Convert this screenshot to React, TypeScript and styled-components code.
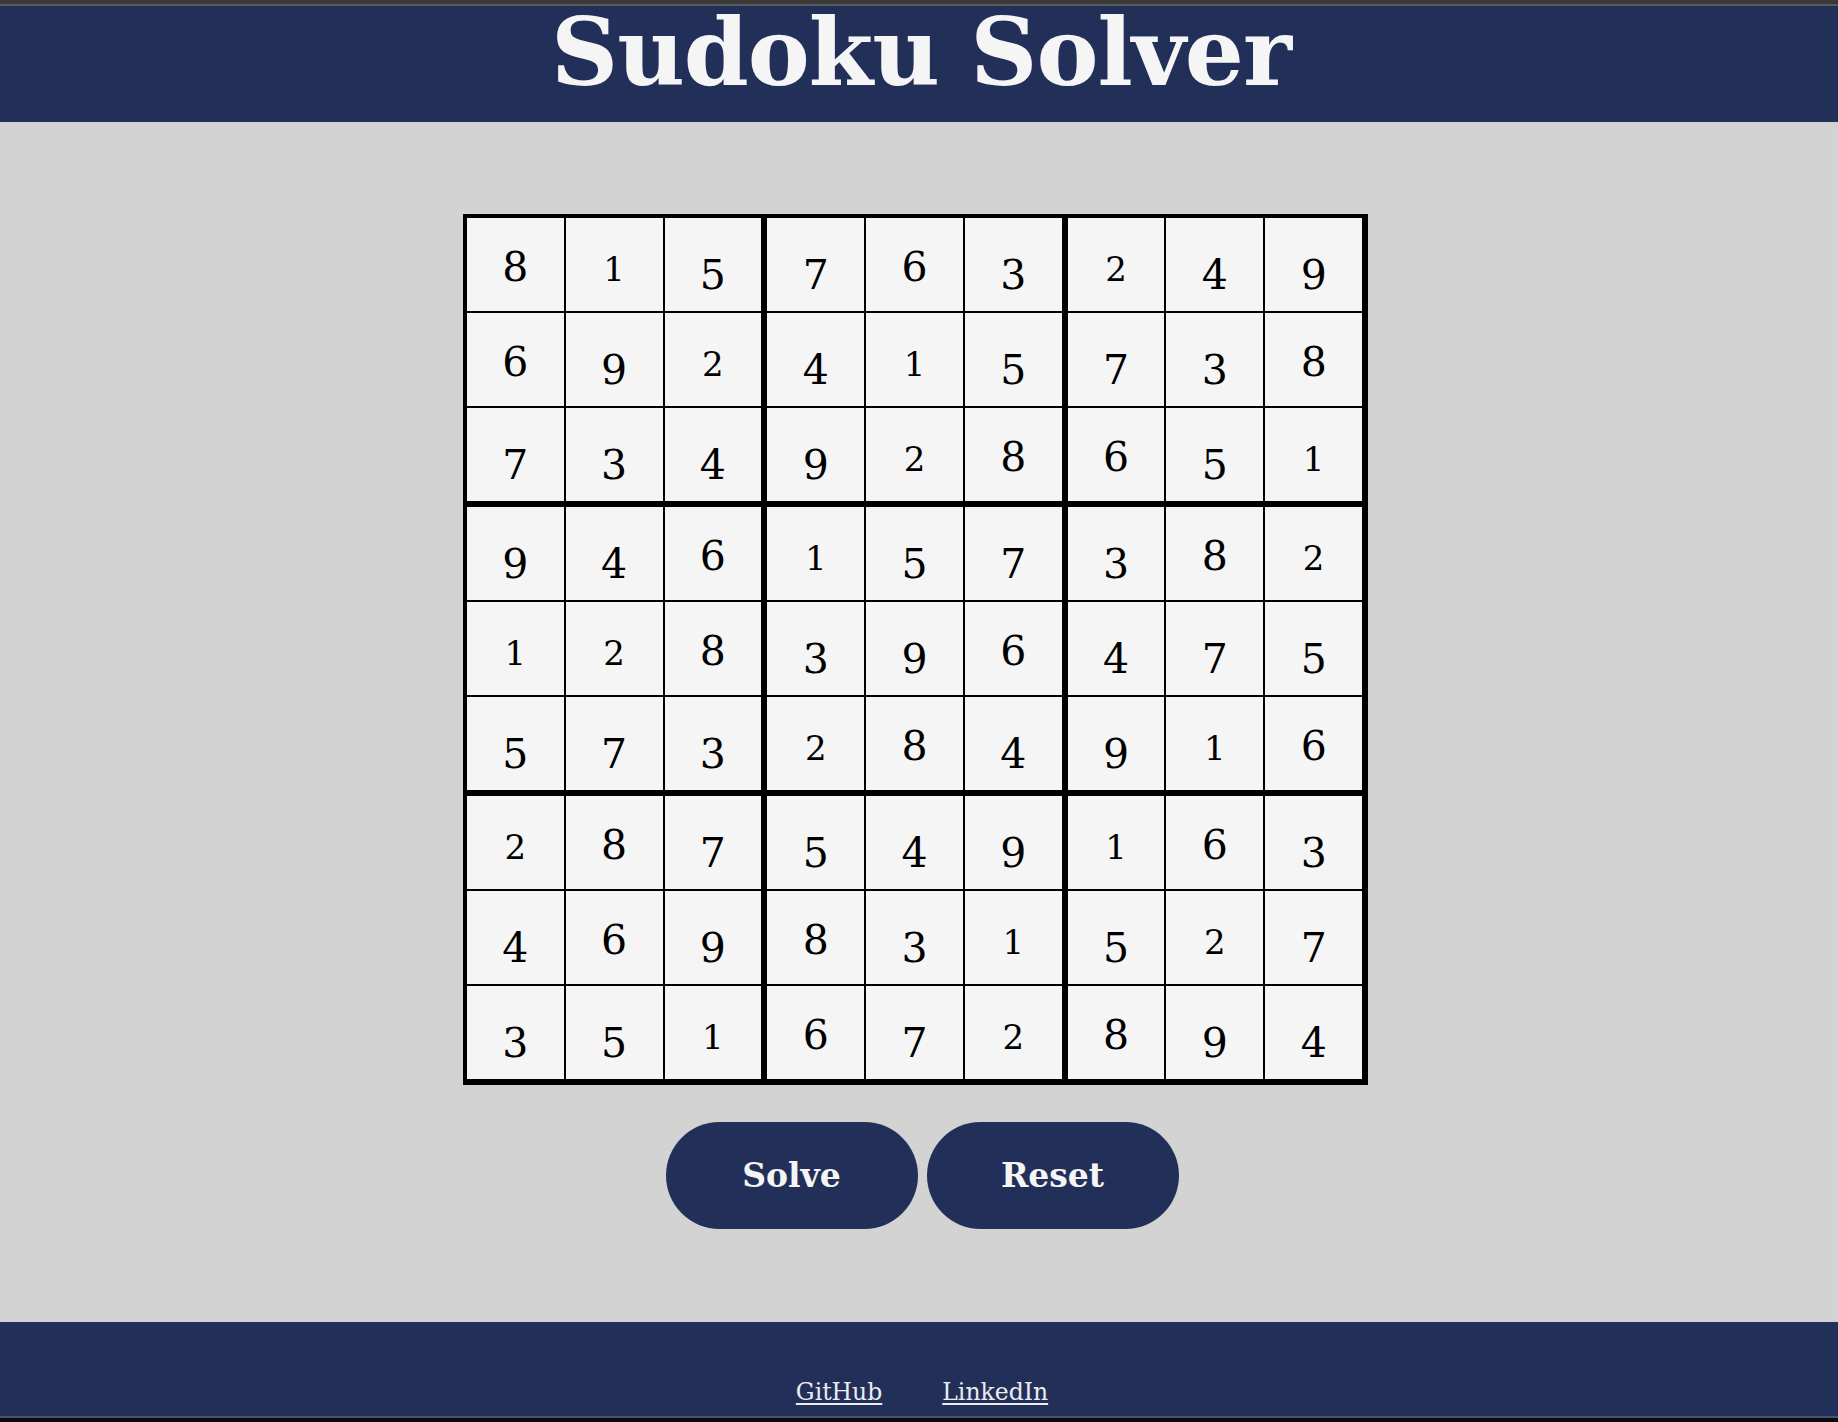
import React, { useState } from "react";
import styled, { createGlobalStyle } from "styled-components";

const GlobalStyle = createGlobalStyle`
  html, body {
    margin: 0;
    padding: 0;
    background: #d3d3d3;
  }
  body {
    font-family: "DejaVu Serif", "Liberation Serif", serif;
  }
`;

const NAVY = "#223059";

const Page = styled.div`
  display: flex;
  flex-direction: column;
  min-height: 1422px;
  box-sizing: border-box;
  border-top: 4px solid #383838;
  border-bottom: 4px solid #0b0b0b;
  background: #d3d3d3;
`;

const Header = styled.header`
  background: ${NAVY};
  border-top: 2px solid #5a5a5a;
  height: 116px;
  display: flex;
  justify-content: center;
  align-items: flex-start;
`;

const Title = styled.h1`
  margin: 0 0 0 4px;
  font-family: "DejaVu Serif", "Liberation Serif", serif;
  font-size: 93px;
  line-height: 93px;
  font-weight: 700;
  letter-spacing: -1px;
  color: #f5f5f5;
`;

const Main = styled.main`
  flex: 1;
  display: flex;
  flex-direction: column;
  align-items: center;
  padding: 92px 0 93px;
`;

const Board = styled.div`
  display: grid;
  grid-template-columns: repeat(9, auto);
  border: 3px solid #000;
  background: #f5f5f5;
  margin-right: 7px;
`;

type CellProps = {
  $size: number;
  $pad: number;
  $top: boolean;
  $right: boolean;
  $bottom: boolean;
  $left: boolean;
};

const Cell = styled.input<CellProps>`
  box-sizing: content-box;
  width: 96.8px;
  height: ${(p) => 93 - p.$pad}px;
  padding: ${(p) => p.$pad}px 0 0;
  margin: 0;
  border-style: solid;
  border-color: #000;
  border-top-width: ${(p) => (p.$top ? 3 : 1)}px;
  border-right-width: ${(p) => (p.$right ? 3 : 1)}px;
  border-bottom-width: ${(p) => (p.$bottom ? 3 : 1)}px;
  border-left-width: ${(p) => (p.$left ? 3 : 1)}px;
  border-radius: 0;
  background: #f5f5f5;
  color: #000;
  font-family: "DejaVu Serif", "Liberation Serif", serif;
  font-size: ${(p) => p.$size}px;
  font-weight: 400;
  text-align: center;
  outline: none;
  appearance: none;
`;

const Actions = styled.div`
  display: flex;
  gap: 9px;
  margin-top: 37px;
  margin-left: 6px;
`;

const ActionButton = styled.button`
  width: 252px;
  height: 107px;
  border: none;
  border-radius: 54px;
  background: ${NAVY};
  color: #f5f5f5;
  font-family: "DejaVu Serif", "Liberation Serif", serif;
  font-weight: 700;
  font-size: 33px;
  cursor: pointer;
  padding: 0;
`;

const Footer = styled.footer`
  box-sizing: border-box;
  height: 96px;
  background: ${NAVY};
  border-bottom: 2px solid #4b5373;
  padding-top: 57px;
  padding-left: 6px;
  display: flex;
  justify-content: center;
  align-items: flex-start;
  gap: 60px;
`;

const FooterLink = styled.a`
  color: #ececf0;
  font-family: "DejaVu Serif", "Liberation Serif", serif;
  font-size: 23.5px;
  line-height: 27px;
  text-decoration: underline;
  text-decoration-thickness: 2px;
  text-underline-offset: 3px;
`;

const SOLVED: string[][] = [
  "815763249",
  "692415738",
  "734928651",
  "946157382",
  "128396475",
  "573284916",
  "287549163",
  "469831527",
  "351672894",
].map((r) => r.split(""));

function figure(d: string): { size: number; pad: number } {
  if (d !== "" && "012".includes(d)) return { size: 34, pad: 8 };
  if (d !== "" && "68".includes(d)) return { size: 41, pad: 4 };
  if (d !== "" && "34579".includes(d)) return { size: 41, pad: 20 };
  return { size: 41, pad: 4 };
}

function solve(grid: string[][]): string[][] | null {
  const g = grid.map((r) => r.map((c) => (c === "" ? 0 : Number(c))));
  const ok = (r: number, c: number, v: number) => {
    for (let i = 0; i < 9; i++) {
      if (g[r][i] === v || g[i][c] === v) return false;
    }
    const br = Math.floor(r / 3) * 3;
    const bc = Math.floor(c / 3) * 3;
    for (let i = 0; i < 3; i++)
      for (let j = 0; j < 3; j++) if (g[br + i][bc + j] === v) return false;
    return true;
  };
  const bt = (): boolean => {
    for (let r = 0; r < 9; r++)
      for (let c = 0; c < 9; c++)
        if (g[r][c] === 0) {
          for (let v = 1; v <= 9; v++) {
            if (ok(r, c, v)) {
              g[r][c] = v;
              if (bt()) return true;
              g[r][c] = 0;
            }
          }
          return false;
        }
    return true;
  };
  return bt() ? g.map((r) => r.map(String)) : null;
}

export default function App() {
  const [grid, setGrid] = useState<string[][]>(SOLVED);

  const update = (r: number, c: number, v: string) => {
    const val = v.replace(/[^1-9]/g, "").slice(-1);
    setGrid((g) => g.map((row, ri) => row.map((cell, ci) => (ri === r && ci === c ? val : cell))));
  };

  const onSolve = () => {
    const res = solve(grid);
    if (res) setGrid(res);
  };

  const onReset = () => setGrid(Array.from({ length: 9 }, () => Array(9).fill("")));

  return (
    <Page>
      <GlobalStyle />
      <Header>
        <Title>Sudoku Solver</Title>
      </Header>
      <Main>
        <Board>
          {grid.map((row, r) =>
            row.map((v, c) => {
              const f = figure(v);
              return (
                <Cell
                  key={`${r}-${c}`}
                  value={v}
                  onChange={(e) => update(r, c, e.target.value)}
                  $size={f.size}
                  $pad={f.pad}
                  $top={r === 3 || r === 6}
                  $bottom={r === 2 || r === 5 || r === 8}
                  $left={c === 3 || c === 6}
                  $right={c === 2 || c === 5 || c === 8}
                />
              );
            })
          )}
        </Board>
        <Actions>
          <ActionButton onClick={onSolve}>Solve</ActionButton>
          <ActionButton onClick={onReset}>Reset</ActionButton>
        </Actions>
      </Main>
      <Footer>
        <FooterLink href="#">GitHub</FooterLink>
        <FooterLink href="#">LinkedIn</FooterLink>
      </Footer>
    </Page>
  );
}
